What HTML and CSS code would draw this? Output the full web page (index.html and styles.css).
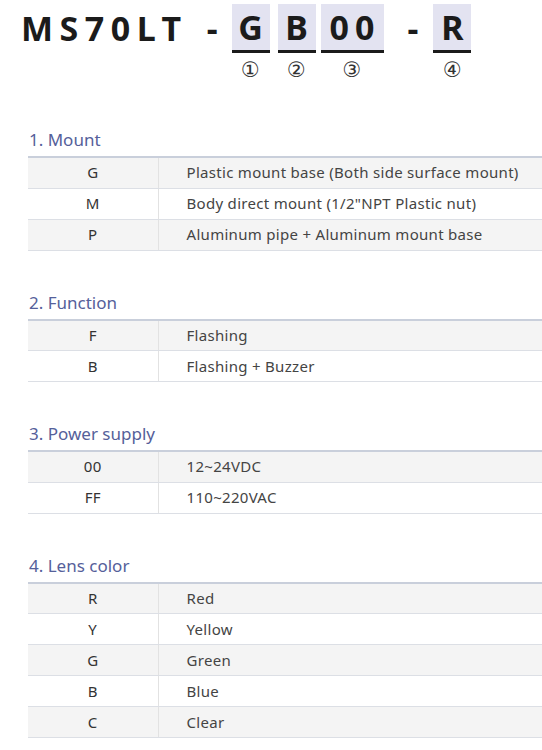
FILE: index.html
```html
<!DOCTYPE html>
<html lang="en">
<head>
    <meta charset="UTF-8">
    <meta name="viewport" content="width=device-width, initial-scale=1.0">
    <title>MS70LT Ordering Information</title>
    <link rel="stylesheet" href="styles.css">
</head>
<body>
    <!-- Model code -->
    <div class="model">
        <span class="model-base">MS70LT</span>
        <span class="dash">-</span>
        <div class="part part-g">
            <span class="part-code">G</span>
            <span class="part-num">①</span>
        </div>
        <div class="part part-b">
            <span class="part-code">B</span>
            <span class="part-num">②</span>
        </div>
        <div class="part part-wide">
            <span class="part-code">00</span>
            <span class="part-num">③</span>
        </div>
        <span class="dash dash-2">-</span>
        <div class="part part-r">
            <span class="part-code">R</span>
            <span class="part-num">④</span>
        </div>
    </div>

    <!-- 1. Mount -->
    <div class="section">
        <h3>1. Mount</h3>
        <table class="spec">
            <tr><td class="code">G</td><td>Plastic mount base (Both side surface mount)</td></tr>
            <tr><td class="code">M</td><td>Body direct mount (1/2"NPT Plastic nut)</td></tr>
            <tr><td class="code">P</td><td>Aluminum pipe + Aluminum mount base</td></tr>
        </table>
    </div>

    <!-- 2. Function -->
    <div class="section">
        <h3>2. Function</h3>
        <table class="spec">
            <tr><td class="code">F</td><td>Flashing</td></tr>
            <tr><td class="code">B</td><td>Flashing + Buzzer</td></tr>
        </table>
    </div>

    <!-- 3. Power supply -->
    <div class="section">
        <h3>3. Power supply</h3>
        <table class="spec">
            <tr><td class="code">00</td><td>12~24VDC</td></tr>
            <tr><td class="code">FF</td><td>110~220VAC</td></tr>
        </table>
    </div>

    <!-- 4. Lens color -->
    <div class="section">
        <h3>4. Lens color</h3>
        <table class="spec">
            <tr><td class="code">R</td><td>Red</td></tr>
            <tr><td class="code">Y</td><td>Yellow</td></tr>
            <tr><td class="code">G</td><td>Green</td></tr>
            <tr><td class="code">B</td><td>Blue</td></tr>
            <tr><td class="code">C</td><td>Clear</td></tr>
        </table>
    </div>
</body>
</html>
```

FILE: styles.css
```css
* {
    margin: 0;
    padding: 0;
    box-sizing: border-box;
}

body {
    font-family: "Noto Sans", "Open Sans", sans-serif;
    background: #fff;
    color: #444;
    width: 542px;
    overflow: hidden;
}

/* model code line */
.model {
    display: flex;
    align-items: flex-start;
    padding: 4px 0 0 21px;
    height: 129px;
    font-weight: 700;
    color: #1b1b1b;
}

.model-base {
    font-size: 34px;
    line-height: 49px;
    letter-spacing: 6.5px;
}

.dash {
    font-size: 34px;
    line-height: 49px;
    margin-left: 19px;
    margin-right: 14px;
}

.dash-2 {
    margin-left: 16px;
    margin-right: 15px;
}

.part {
    display: flex;
    flex-direction: column;
    align-items: center;
    margin-right: 8px;
}

.part-code {
    display: block;
    width: 38px;
    height: 49px;
    background: #e3e3f1;
    border-bottom: 3px solid #1b1b1b;
    text-align: center;
    font-size: 34px;
    line-height: 46px;
}

.part-wide .part-code {
    width: 63px;
    letter-spacing: 6px;
    padding-left: 6px;
}

.part-b { margin-right: 5px; }

.part-num {
    font-family: "DejaVu Sans", "Noto Sans CJK KR", sans-serif;
    font-weight: 400;
    font-size: 21px;
    line-height: 22px;
    margin-top: 6px;
    color: #333;
}

/* sections */
.section {
    padding-left: 28px;
    margin-bottom: 41px;
}

.section h3 {
    font-size: 17px;
    font-weight: 400;
    color: #55609a;
    line-height: 22px;
    padding-left: 1px;
    margin-bottom: 5px;
}

.spec {
    width: 514px;
    border-collapse: collapse;
    border-top: 2px solid #c9cfdb;
    font-size: 15px;
    letter-spacing: 0.3px;
}

.spec td {
    height: 31px;
    border-bottom: 1px solid #dcdfe5;
    padding: 0 0 1px 28px;
    white-space: nowrap;
}

.spec td.code {
    width: 130px;
    padding: 0 0 1px 0;
    text-align: center;
    border-right: 1px solid #e2e2e2;
    color: #333;
}

.spec tr:nth-child(odd) td {
    background: #f4f4f4;
}
```
